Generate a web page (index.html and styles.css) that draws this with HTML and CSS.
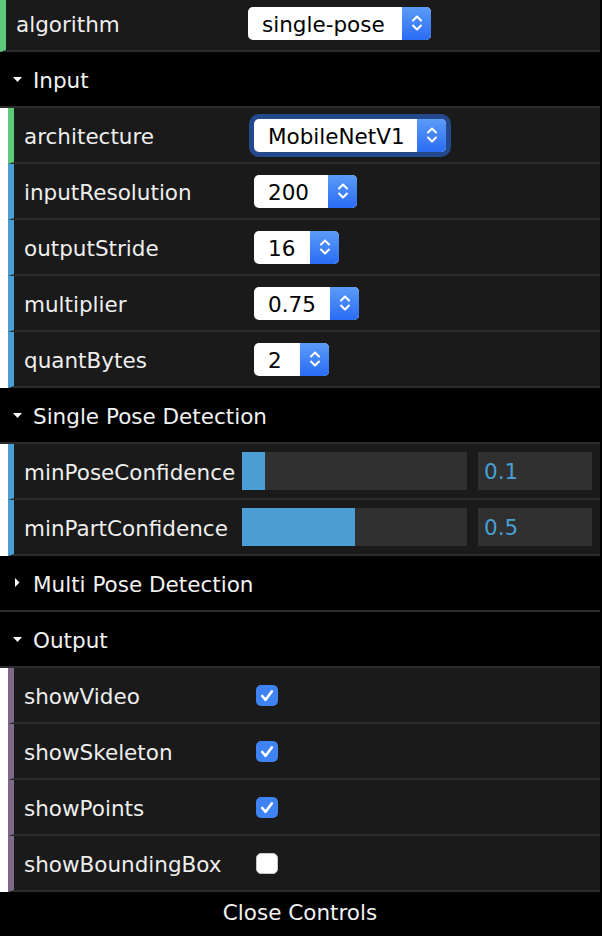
FILE: index.html
```html
<!DOCTYPE html>
<html>
<head>
<meta charset="utf-8">
<link rel="stylesheet" href="styles.css">
</head>
<body>
<div class="gui">
  <ul class="root">
    <li class="row string top">
      <span class="name">algorithm</span>
      <div class="select w-algo">
        <span class="val">single-pose</span>
        <span class="arrow"><svg width="12" height="20" viewBox="0 0 12 20"><path d="M2 7.5 L6 3.5 L10 7.5 M2 12.5 L6 16.5 L10 12.5" fill="none" stroke="#fff" stroke-width="2" stroke-linecap="round" stroke-linejoin="round"/></svg></span>
      </div>
    </li>
    <li class="folder">
      <div class="title"><svg class="tri" width="9" height="5" viewBox="0 0 9 5"><path d="M0 0 H9 L4.5 5 Z" fill="#fff"/></svg><span>Input</span></div>
      <ul class="sub">
        <li class="row string">
          <span class="name">architecture</span>
          <div class="select focus w-arch">
            <span class="val">MobileNetV1</span>
            <span class="arrow"><svg width="12" height="20" viewBox="0 0 12 20"><path d="M2 7.5 L6 3.5 L10 7.5 M2 12.5 L6 16.5 L10 12.5" fill="none" stroke="#fff" stroke-width="2" stroke-linecap="round" stroke-linejoin="round"/></svg></span>
          </div>
        </li>
        <li class="row number">
          <span class="name">inputResolution</span>
          <div class="select w-res">
            <span class="val">200</span>
            <span class="arrow"><svg width="12" height="20" viewBox="0 0 12 20"><path d="M2 7.5 L6 3.5 L10 7.5 M2 12.5 L6 16.5 L10 12.5" fill="none" stroke="#fff" stroke-width="2" stroke-linecap="round" stroke-linejoin="round"/></svg></span>
          </div>
        </li>
        <li class="row number">
          <span class="name">outputStride</span>
          <div class="select w-stride">
            <span class="val">16</span>
            <span class="arrow"><svg width="12" height="20" viewBox="0 0 12 20"><path d="M2 7.5 L6 3.5 L10 7.5 M2 12.5 L6 16.5 L10 12.5" fill="none" stroke="#fff" stroke-width="2" stroke-linecap="round" stroke-linejoin="round"/></svg></span>
          </div>
        </li>
        <li class="row number">
          <span class="name">multiplier</span>
          <div class="select w-mult">
            <span class="val">0.75</span>
            <span class="arrow"><svg width="12" height="20" viewBox="0 0 12 20"><path d="M2 7.5 L6 3.5 L10 7.5 M2 12.5 L6 16.5 L10 12.5" fill="none" stroke="#fff" stroke-width="2" stroke-linecap="round" stroke-linejoin="round"/></svg></span>
          </div>
        </li>
        <li class="row number">
          <span class="name">quantBytes</span>
          <div class="select w-quant">
            <span class="val">2</span>
            <span class="arrow"><svg width="12" height="20" viewBox="0 0 12 20"><path d="M2 7.5 L6 3.5 L10 7.5 M2 12.5 L6 16.5 L10 12.5" fill="none" stroke="#fff" stroke-width="2" stroke-linecap="round" stroke-linejoin="round"/></svg></span>
          </div>
        </li>
      </ul>
    </li>
    <li class="folder">
      <div class="title"><svg class="tri" width="9" height="5" viewBox="0 0 9 5"><path d="M0 0 H9 L4.5 5 Z" fill="#fff"/></svg><span>Single Pose Detection</span></div>
      <ul class="sub">
        <li class="row number">
          <span class="name">minPoseConfidence</span>
          <div class="slider"><div class="fill" style="width:10%"></div></div>
          <div class="num">0.1</div>
        </li>
        <li class="row number">
          <span class="name">minPartConfidence</span>
          <div class="slider"><div class="fill" style="width:50%"></div></div>
          <div class="num">0.5</div>
        </li>
      </ul>
    </li>
    <li class="folder">
      <div class="title"><svg class="tri closed" width="9" height="9" viewBox="0 0 9 9"><path d="M2 0 V9 L6.5 4.5 Z" fill="#fff"/></svg><span>Multi Pose Detection</span></div>
    </li>
    <li class="folder">
      <div class="title"><svg class="tri" width="9" height="5" viewBox="0 0 9 5"><path d="M0 0 H9 L4.5 5 Z" fill="#fff"/></svg><span>Output</span></div>
      <ul class="sub">
        <li class="row boolean">
          <span class="name">showVideo</span>
          <span class="check on"><svg width="22" height="21" viewBox="0 0 22 21"><path d="M6.2 11 L9.6 14.8 L15.8 6.4" fill="none" stroke="#fff" stroke-width="2.6" stroke-linecap="round" stroke-linejoin="round"/></svg></span>
        </li>
        <li class="row boolean">
          <span class="name">showSkeleton</span>
          <span class="check on"><svg width="22" height="21" viewBox="0 0 22 21"><path d="M6.2 11 L9.6 14.8 L15.8 6.4" fill="none" stroke="#fff" stroke-width="2.6" stroke-linecap="round" stroke-linejoin="round"/></svg></span>
        </li>
        <li class="row boolean">
          <span class="name">showPoints</span>
          <span class="check on"><svg width="22" height="21" viewBox="0 0 22 21"><path d="M6.2 11 L9.6 14.8 L15.8 6.4" fill="none" stroke="#fff" stroke-width="2.6" stroke-linecap="round" stroke-linejoin="round"/></svg></span>
        </li>
        <li class="row boolean">
          <span class="name">showBoundingBox</span>
          <span class="check"></span>
        </li>
      </ul>
    </li>
  </ul>
  <div class="close">Close Controls</div>
</div>
</body>
</html>
```

FILE: styles.css
```css
html, body {
  margin: 0;
  padding: 0;
  background: #000;
}

.gui {
  width: 602px;
  height: 940px;
  margin-top: -4px;
  background: #000;
  font-family: "DejaVu Sans", sans-serif;
  font-size: 21.5px;
  color: #eee;
  overflow: hidden;
}

ul {
  list-style: none;
  margin: 0;
  padding: 0;
}

.root {
  width: 600px;
}

.sub {
  background: #fff;
  padding-left: 8px;
}

.row {
  display: flex;
  align-items: center;
  height: 56px;
  box-sizing: border-box;
  background: #1a1a1a;
  border-bottom: 2px solid #2c2c2c;
  border-left: 6px solid #5ecb7c;
  padding-left: 10px;
}

.row.string { border-left-color: #5ecb7c; }
.row.number { border-left-color: #4a9fd5; }
.row.boolean { border-left-color: #806889; }

.name {
  width: 230px;
  flex: none;
  white-space: nowrap;
  line-height: 50px;
  padding-top: 4px;
}

.row.top .name {
  width: 232px;
}

.title {
  display: flex;
  align-items: center;
  height: 56px;
  box-sizing: border-box;
  background: #000;
  border-bottom: 2px solid #2c2c2c;
  padding-left: 13px;
  color: #f2f2f2;
}

.title span {
  padding-top: 3px;
}

.title .tri {
  flex: none;
  margin-right: 11px;
}

.title .tri.closed {
  margin-top: -1px;
}

.select {
  display: flex;
  height: 33px;
  box-sizing: border-box;
  background: #fff;
  border-radius: 5px;
  color: #000;
  flex: none;
}

.select .val {
  flex: 1;
  padding-left: 14px;
  line-height: 35px;
  white-space: nowrap;
}

.select .arrow {
  width: 29px;
  flex: none;
  display: flex;
  align-items: center;
  justify-content: center;
  background: linear-gradient(#5b9cf8, #2a6cf4);
  border-radius: 0 5px 5px 0;
}

.select.focus {
  box-shadow: 0 0 0 5px #23488b;
}

.w-algo { width: 183px; }
.w-arch { width: 192px; }
.w-res { width: 103px; }
.w-stride { width: 85px; }
.w-mult { width: 105px; }
.w-quant { width: 75px; }

.slider {
  width: 225px;
  height: 38px;
  margin-left: -12px;
  background: #303030;
  flex: none;
}

.slider .fill {
  height: 100%;
  background: #4c9fd4;
}

.num {
  width: 114px;
  height: 38px;
  box-sizing: border-box;
  margin-left: 11px;
  padding-left: 6px;
  padding-top: 2px;
  background: #303030;
  color: #4a9fd4;
  line-height: 36px;
  flex: none;
}

.check {
  width: 22px;
  height: 21px;
  margin-left: 2px;
  border-radius: 5px;
  background: #fff;
  box-sizing: border-box;
  border: 1px solid #c8c8c8;
  flex: none;
  display: flex;
}

.check.on {
  background: #3f83f3;
  border: none;
}

.close {
  height: 40px;
  line-height: 42px;
  text-align: center;
  background: #000;
  color: #f2f2f2;
  width: 600px;
}
```
